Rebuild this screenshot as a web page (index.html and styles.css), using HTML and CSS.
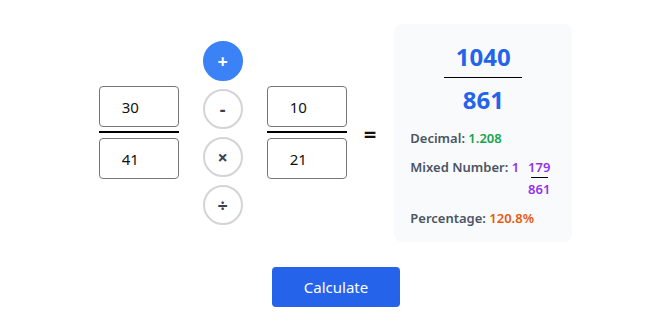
FILE: index.html
```html
<!DOCTYPE html>
<html lang="en">
<head>
  <meta charset="UTF-8">
  <title>Fraction Calculator</title>
  <link rel="stylesheet" href="styles.css">
</head>
<body>
  <div class="calculator">
    <div class="row">
      <div class="fraction">
        <input class="num-input" type="number" value="30">
        <div class="bar"></div>
        <input class="num-input" type="number" value="41">
      </div>

      <div class="operators">
        <button class="op active">+</button>
        <button class="op">-</button>
        <button class="op">×</button>
        <button class="op">÷</button>
      </div>

      <div class="fraction">
        <input class="num-input" type="number" value="10">
        <div class="bar"></div>
        <input class="num-input" type="number" value="21">
      </div>

      <div class="equals">=</div>

      <div class="result">
        <div class="result-fraction">
          <div class="big-num">1040</div>
          <div class="big-bar"></div>
          <div class="big-num">861</div>
        </div>
        <div class="info">Decimal: <span class="decimal">1.208</span></div>
        <div class="info mixed">
          <span>Mixed Number: <span class="purple">1</span></span>
          <span class="mini-fraction purple">
            <span>179</span>
            <span class="mini-bar"></span>
            <span>861</span>
          </span>
        </div>
        <div class="info">Percentage: <span class="percent">120.8%</span></div>
      </div>
    </div>

    <button class="calc-btn">Calculate</button>
  </div>
</body>
</html>
```

FILE: styles.css
```css
body {
  margin: 0;
  height: 330px;
  background-color: #ffffff;
  font-family: 'Noto Sans', 'Open Sans', sans-serif;
  display: flex;
  justify-content: center;
  align-items: center;
}

.calculator {
  display: flex;
  flex-direction: column;
  align-items: center;
  gap: 25px;
}

.row {
  display: flex;
  align-items: center;
  margin-left: -1px;
}

.fraction {
  display: flex;
  flex-direction: column;
  width: 80px;
}

.num-input {
  box-sizing: border-box;
  width: 80px;
  height: 41px;
  padding: 0 0 0 22px;
  border: 1px solid #767676;
  border-radius: 4px;
  font-family: 'Noto Sans', sans-serif;
  font-size: 15px;
  color: #111;
  background: #fff;
  -moz-appearance: textfield;
}

.num-input::-webkit-inner-spin-button,
.num-input::-webkit-outer-spin-button {
  -webkit-appearance: none;
  margin: 0;
}

.bar {
  height: 2px;
  background: #000;
  margin: 4px 0 5px;
}

.operators {
  display: flex;
  flex-direction: column;
  gap: 8px;
  margin: 0 24px;
}

.op {
  box-sizing: border-box;
  width: 40px;
  height: 40px;
  border-radius: 50%;
  border: 2px solid #d4d4d8;
  background: #fff;
  color: #374151;
  font-family: 'Noto Sans', sans-serif;
  font-size: 18px;
  font-weight: bold;
  padding: 0;
  cursor: pointer;
}

.op.active {
  background: #3b82f6;
  border-color: #3b82f6;
  color: #fff;
}

.equals {
  font-size: 22px;
  font-weight: bold;
  margin: 0 18px 0 17px;
  color: #111;
}

.result {
  box-sizing: border-box;
  width: 178px;
  background: #f8fafc;
  border-radius: 8px;
  padding: 16px 16px 15px;
}

.result-fraction {
  display: flex;
  flex-direction: column;
  align-items: center;
  margin-bottom: 12px;
}

.big-num {
  font-size: 24px;
  font-weight: bold;
  color: #2563eb;
  line-height: 34px;
}

.big-bar {
  width: 78px;
  height: 1px;
  background: #000;
  margin: 3px 0 5px;
}

.info {
  font-size: 13px;
  font-weight: 600;
  color: #4b5563;
  line-height: 18px;
  margin-top: 11px;
}

.mixed {
  display: flex;
  align-items: flex-start;
  gap: 9px;
}

.mini-fraction {
  display: inline-flex;
  flex-direction: column;
  align-items: center;
}

.mini-bar {
  width: 17px;
  height: 1px;
  background: #000;
  margin: 1px 0 2px;
}

.decimal {
  color: #16a34a;
}

.purple {
  color: #9333ea;
}

.percent {
  color: #ea580c;
}

.calc-btn {
  width: 128px;
  height: 40px;
  background-color: #2563eb;
  border: none;
  border-radius: 4px;
  color: #fff;
  font-family: 'Noto Sans', sans-serif;
  font-size: 15px;
  cursor: pointer;
}
```
